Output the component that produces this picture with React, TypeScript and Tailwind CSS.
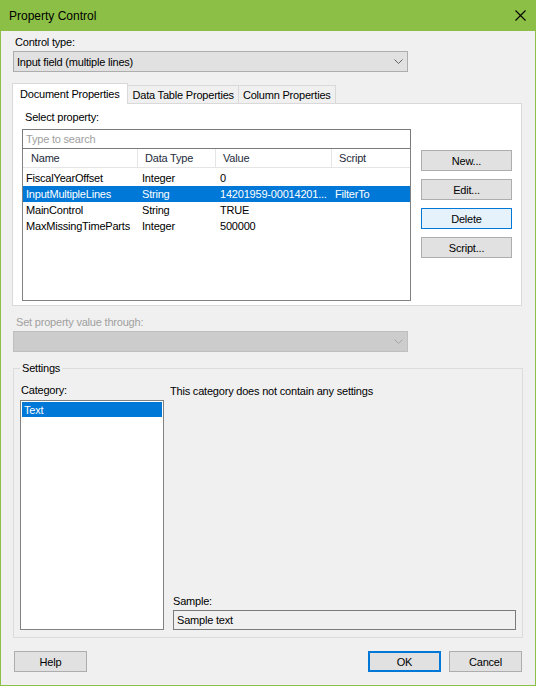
import React from "react";

function Chevron({ color }: { color: string }) {
  return (
    <svg width="9" height="5" viewBox="0 0 9 5" className="shrink-0">
      <path d="M0.5 0.5 L4.5 4.5 L8.5 0.5" fill="none" stroke={color} strokeWidth="1" />
    </svg>
  );
}

function Btn({ label, variant = "normal", className = "" }: { label: string; variant?: "normal" | "hot" | "default"; className?: string }) {
  const v =
    variant === "hot"
      ? "bg-[#e5f1fb] border border-[#0078d7]"
      : variant === "default"
      ? "bg-[#e1e1e1] border-2 border-[#0078d7]"
      : "bg-[#e1e1e1] border border-[#adadad]";
  return <div className={`h-[21px] flex items-center justify-center ${v} ${className}`}>{label}</div>;
}

const rows = [
  { name: "FiscalYearOffset", type: "Integer", value: "0", script: "" },
  { name: "InputMultipleLines", type: "String", value: "14201959-00014201...", script: "FilterTo", sel: true },
  { name: "MainControl", type: "String", value: "TRUE", script: "" },
  { name: "MaxMissingTimeParts", type: "Integer", value: "500000", script: "" },
];

export default function App() {
  return (
    <div className="w-[536px] h-[686px] bg-[#8bbf45] flex flex-col px-px pb-px text-[11px] leading-[14px] tracking-[-0.2px] text-black font-['Liberation_Sans',Arial,sans-serif]">
      {/* Title bar */}
      <div className="h-[31px] shrink-0 flex items-center justify-between pl-[8px] pr-[9px]">
        <span className="text-[12px] tracking-normal">Property Control</span>
        <svg width="11" height="11" viewBox="0 0 11 11">
          <path d="M0.5 0.5 L10.5 10.5 M10.5 0.5 L0.5 10.5" stroke="#000" strokeWidth="1.1" fill="none" />
        </svg>
      </div>

      {/* Content */}
      <div className="flex-1 bg-[#f0f0f0] flex flex-col pl-[11px]">
        <div className="mt-[4px] ml-[3px]">Control type:</div>
        <div className="mt-[2px] ml-[1px] w-[395px] h-[21px] bg-[#e1e1e1] border border-[#adadad] flex items-center justify-between pl-[3px] pr-[4px]">
          <span>Input field (multiple lines)</span>
          <Chevron color="#606060" />
        </div>

        {/* Tabs */}
        <div className="mt-[11px] flex items-end relative z-10 -mb-px">
          <div className="h-[21px] bg-white border border-b-0 border-[#d9d9d9] pl-[7px] pr-[7px] flex items-center">
            Document Properties
          </div>
          <div className="h-[19px] bg-[#f0f0f0] border border-l-0 border-[#d9d9d9] pl-[5px] pr-[4px] flex items-center">
            Data Table Properties
          </div>
          <div className="h-[19px] bg-[#f0f0f0] border border-l-0 border-[#d9d9d9] pl-[4px] pr-[4px] flex items-center">
            Column Properties
          </div>
        </div>

        {/* Tab panel */}
        <div className="w-[510px] h-[203px] bg-white border border-[#d9d9d9] flex flex-col">
          <div className="mt-[6px] ml-[12px]">Select property:</div>
          <div className="flex mt-[5px] ml-[9px]">
            <div className="flex flex-col w-[389px]">
              <div className="h-[20px] border border-[#7a7a7a] flex items-center pl-[3px] text-[#a0a0a0]">Type to search</div>
              <div className="h-[152px] border border-t-0 border-[#828282] bg-white flex flex-col">
                <div className="h-[19px] flex border-b border-[#e5e5e5] text-[#1e2b3c]">
                  <div className="w-[115px] pl-[8px] flex items-center border-r border-[#e5e5e5]">Name</div>
                  <div className="w-[78px] pl-[7px] flex items-center border-r border-[#e5e5e5]">Data Type</div>
                  <div className="w-[116px] pl-[7px] flex items-center border-r border-[#e5e5e5]">Value</div>
                  <div className="flex-1 pl-[7px] flex items-center">Script</div>
                </div>
                <div className="mt-[2px] flex flex-col">
                  {rows.map((r) => (
                    <div key={r.name} className={`h-[16px] flex items-center ${r.sel ? "bg-[#0078d7] text-white" : ""}`}>
                      <div className="w-[115px] pl-[3px] whitespace-nowrap">{r.name}</div>
                      <div className="w-[78px] pl-[4px]">{r.type}</div>
                      <div className="w-[116px] pl-[4px] whitespace-nowrap">{r.value}</div>
                      <div className="flex-1 pl-[3px]">{r.script}</div>
                    </div>
                  ))}
                </div>
              </div>
            </div>
            <div className="ml-[10px] mt-[21px] flex flex-col gap-[8px] w-[91px]">
              <Btn label="New..." />
              <Btn label="Edit..." />
              <Btn label="Delete" variant="hot" />
              <Btn label="Script..." />
            </div>
          </div>
        </div>

        <div className="mt-[9px] ml-[4px] text-[#a0a0a0]">Set property value through:</div>
        <div className="mt-[2px] ml-[1px] w-[395px] h-[21px] bg-[#cccccc] border border-[#bfbfbf] flex items-center justify-end pr-[4px]">
          <Chevron color="#a6a6a6" />
        </div>

        {/* Settings group */}
        <fieldset className="mt-[9px] ml-[1px] w-[509px] border border-[#dcdcdc] px-[6px] pb-[7px]">
          <legend className="ml-[0px] px-[2px]">Settings</legend>
          <div className="flex mt-[8px]">
            <div className="w-[144px] flex flex-col">
              <div className="ml-[1px]">Category:</div>
              <div className="mt-[3px] h-[230px] border border-[#828282] bg-white p-px">
                <div className="h-[15px] bg-[#0078d7] text-white pl-[2px] flex items-center">Text</div>
              </div>
            </div>
            <div className="ml-[6px] flex-1 flex flex-col justify-between">
              <div className="mt-[1px]">This category does not contain any settings</div>
              <div className="flex flex-col ml-[3px]">
                <div>Sample:</div>
                <div className="mt-[2px] h-[20px] w-[343px] border border-[#7a7a7a] bg-[#f0f0f0] flex items-center pl-[3px]">
                  Sample text
                </div>
              </div>
            </div>
          </div>
        </fieldset>

        {/* Bottom buttons */}
        <div className="mt-[13px] flex items-center pr-[13px]">
          <Btn label="Help" className="w-[73px] ml-[2px]" />
          <div className="flex-1" />
          <Btn label="OK" variant="default" className="w-[73px]" />
          <Btn label="Cancel" className="w-[73px] ml-[8px]" />
        </div>
      </div>
    </div>
  );
}
